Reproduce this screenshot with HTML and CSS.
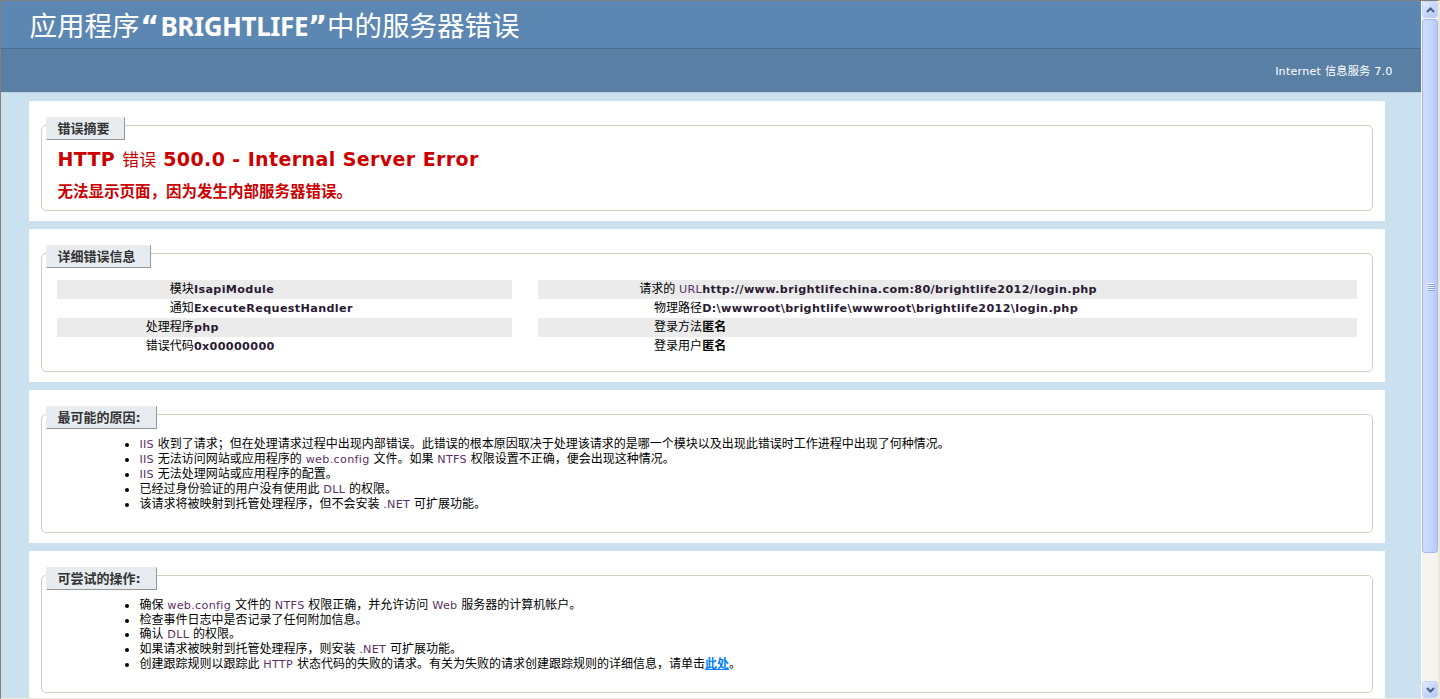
FILE: index.html
```html
<!DOCTYPE html>
<html lang="zh-CN">
<head>
<meta charset="utf-8">
<title>IIS 7.0 详细错误 - 500.0 - Internal Server Error</title>
<link rel="stylesheet" href="styles.css">
</head>
<body>
<div class="window">
  <div class="viewport">
    <div class="header">
      <h1>应用程序<span class="q q-open">“</span><span class="h1-en">BRIGHTLIFE</span><span class="q q-close">”</span>中的服务器错误</h1>
    </div>
    <div class="server-version">
      <p>Internet 信息服务 7.0</p>
    </div>
    <div class="content">
      <div class="container">
        <div class="fs fs-summary">
          <div class="legend">错误摘要</div>
          <h2>HTTP <span class="h2-cjk">错误</span> 500.0 - Internal Server Error</h2>
          <h3>无法显示页面，因为发生内部服务器错误。</h3>
        </div>
      </div>

      <div class="container">
        <div class="fs fs-details">
          <div class="legend">详细错误信息</div>
          <div class="details">
            <div class="details-left">
              <table>
                <tr class="alt"><th>模块</th><td>IsapiModule</td></tr>
                <tr><th>通知</th><td>ExecuteRequestHandler</td></tr>
                <tr class="alt"><th>处理程序</th><td>php</td></tr>
                <tr><th>错误代码</th><td>0x00000000</td></tr>
              </table>
            </div>
            <div class="details-right">
              <table>
                <tr class="alt"><th>请求的 <span class="en">URL</span></th><td>http://www.brightlifechina.com:80/brightlife2012/login.php</td></tr>
                <tr><th>物理路径</th><td>D:\wwwroot\brightlife\wwwroot\brightlife2012\login.php</td></tr>
                <tr class="alt"><th>登录方法</th><td class="cjk">匿名</td></tr>
                <tr><th>登录用户</th><td class="cjk">匿名</td></tr>
              </table>
            </div>
          </div>
        </div>
      </div>

      <div class="container">
        <div class="fs">
          <div class="legend">最可能的原因:</div>
          <ul>
            <li><span class="en">IIS</span> 收到了请求；但在处理请求过程中出现内部错误。此错误的根本原因取决于处理该请求的是哪一个模块以及出现此错误时工作进程中出现了何种情况。</li>
            <li><span class="en">IIS</span> 无法访问网站或应用程序的 <span class="en">web.config</span> 文件。如果 <span class="en">NTFS</span> 权限设置不正确，便会出现这种情况。</li>
            <li><span class="en">IIS</span> 无法处理网站或应用程序的配置。</li>
            <li>已经过身份验证的用户没有使用此 <span class="en">DLL</span> 的权限。</li>
            <li>该请求将被映射到托管处理程序，但不会安装 <span class="en">.NET</span> 可扩展功能。</li>
          </ul>
        </div>
      </div>

      <div class="container">
        <div class="fs">
          <div class="legend">可尝试的操作:</div>
          <ul>
            <li>确保 <span class="en">web.config</span> 文件的 <span class="en">NTFS</span> 权限正确，并允许访问 <span class="en">Web</span> 服务器的计算机帐户。</li>
            <li>检查事件日志中是否记录了任何附加信息。</li>
            <li>确认 <span class="en">DLL</span> 的权限。</li>
            <li>如果请求被映射到托管处理程序，则安装 <span class="en">.NET</span> 可扩展功能。</li>
            <li>创建跟踪规则以跟踪此 <span class="en">HTTP</span> 状态代码的失败的请求。有关为失败的请求创建跟踪规则的详细信息，请单击<a href="#">此处</a>。</li>
          </ul>
        </div>
      </div>
    </div>
  </div>

  <div class="scrollbar">
    <div class="sb-btn">
      <svg width="9" height="6" viewBox="0 0 9 6"><path d="M1 5 L4.5 1.5 L8 5" fill="none" stroke="#4d6185" stroke-width="2"/></svg>
    </div>
    <div class="sb-thumb">
      <div class="grip"><span></span><span></span><span></span><span></span></div>
    </div>
    <div class="sb-track"></div>
    <div class="sb-btn">
      <svg width="9" height="6" viewBox="0 0 9 6"><path d="M1 1 L4.5 4.5 L8 1" fill="none" stroke="#4d6185" stroke-width="2"/></svg>
    </div>
  </div>
</div>
</body>
</html>
```

FILE: styles.css
```css
html, body {
  margin: 0;
  padding: 0;
  height: 699px;
  overflow: hidden;
}

.window {
  display: flex;
  height: 699px;
  box-sizing: border-box;
  border-top: 1px solid #808080;
  border-left: 1px solid #808080;
  border-right: 2px solid #ece9d8;
  border-bottom: 1px solid #ece9d8;
}

.viewport {
  flex: 1;
  min-width: 0;
  overflow: hidden;
  background: #cbe1ef;
  font-family: "DejaVu Sans", "Noto Sans CJK SC", sans-serif;
  font-size: 12px;
  color: #000;
}

/* header */
.header {
  height: 35px;
  padding: 6px 2%;
  background: #5c87b2;
  color: #fff;
  overflow: hidden;
}

.header h1 {
  margin: 0;
  font-family: "Noto Sans CJK SC", sans-serif;
  font-size: 27.5px;
  line-height: 35px;
  font-weight: normal;
  color: #fff;
  white-space: nowrap;
}

.h1-en {
  font-family: "Noto Sans", "Open Sans", sans-serif;
  font-weight: bold;
  font-size: 26px;
  letter-spacing: -0.4px;
  line-height: 0;
}

.q {
  display: inline-block;
  font-family: "DejaVu Sans", sans-serif;
  font-weight: bold;
  font-size: 29px;
  line-height: 0;
  text-align: center;
}

.q-open {
  width: 21px;
}

.q-close {
  width: 19px;
}

.server-version {
  height: 24px;
  padding: 11px 2% 8px;
  background: #5a7fa5;
  border-top: 1px solid #4a6c8e;
  border-bottom: 1px solid #c1cfdd;
  color: #fff;
  text-align: right;
  font-size: 11.2px;
}

.server-version p {
  margin: 5px 0;
  line-height: 14px;
  letter-spacing: 0.2px;
}

/* content */
.content {
  margin-left: 2%;
}

.container {
  background: #fff;
  width: 96%;
  margin-top: 8px;
  padding: 10px;
}

.fs {
  margin: 14px 2px 0;
  padding: 0 15px 10px;
  border: 1px solid #d0d0bf;
  border-radius: 5px;
}

.fs-summary {
  padding-bottom: 7px;
}

.fs-details {
  padding-bottom: 11px;
}

.legend {
  width: max-content;
  margin: -9px 0 8px -11px;
  padding: 4px 15px 4px 10px;
  border-top: 1px solid #ededed;
  border-left: 1px solid #ededed;
  border-right: 1px solid #969696;
  border-bottom: 1px solid #969696;
  background: #e7ecf0;
  color: #333;
  font-weight: bold;
  font-size: 13px;
  line-height: 13px;
}

h2 {
  margin: 0;
  font-size: 19px;
  line-height: 23px;
  color: #cc0000;
  font-weight: bold;
  letter-spacing: 0.4px;
}

.h2-cjk {
  font-weight: normal;
  font-size: 17px;
  letter-spacing: 0;
}

h3 {
  margin: 10px 0 0;
  font-size: 15.5px;
  line-height: 21px;
  color: #cc0000;
  font-weight: bold;
}

/* details */
.details {
  display: flex;
}

.details-left {
  width: 35%;
  margin-right: 2%;
}

.details-right {
  width: 63%;
}

table {
  width: 100%;
  margin: 4px 0;
  border-collapse: collapse;
}

th, td {
  vertical-align: top;
  padding: 3px 0;
  line-height: 13px;
  text-align: left;
}

th {
  width: 30%;
  text-align: right;
  font-weight: normal;
  font-size: 12px;
  white-space: nowrap;
}

.details-right th {
  width: 20%;
}

td {
  font-weight: bold;
  font-size: 11.2px;
  letter-spacing: 0.35px;
  color: #2a1a33;
  white-space: nowrap;
}

td.cjk {
  font-size: 12px;
  letter-spacing: 0;
  color: #000;
}

tr.alt th, tr.alt td {
  background: #ebebeb;
}

/* lists */
ul {
  margin: 0 0 10px 40px;
  padding-left: 42px;
}

li {
  line-height: 14px;
}

.en {
  font-size: 11.2px;
  letter-spacing: 0.3px;
  color: #5c2f66;
}

a {
  color: #007eff;
  font-weight: bold;
  text-decoration: underline;
}

/* scrollbar (Luna style) */
.scrollbar {
  width: 17px;
  flex: none;
  display: flex;
  flex-direction: column;
  background: #f5f4ef;
  border-left: 1px solid #fdfdfb;
  box-sizing: border-box;
}

.sb-btn {
  height: 17px;
  flex: none;
  box-sizing: border-box;
  border: 1px solid #c4d3f6;
  border-radius: 3px;
  background: linear-gradient(135deg, #e4ecfe 0%, #c8d7fc 50%, #b6c9f8 100%);
  display: flex;
  align-items: center;
  justify-content: center;
}

.sb-thumb {
  height: 534px;
  flex: none;
  margin-top: 1px;
  box-sizing: border-box;
  border: 1px solid #a5b9ef;
  border-radius: 3px;
  background: linear-gradient(90deg, #cfdcfe 0%, #c4d5fd 60%, #b4c8f8 100%);
  display: flex;
  align-items: center;
  justify-content: center;
}

.grip {
  display: flex;
  flex-direction: column;
  gap: 1px;
}

.grip span {
  display: block;
  width: 7px;
  height: 1px;
  background: #eef3fe;
  box-shadow: 1px 1px 0 #8aa3e2;
}

.sb-track {
  flex: 1;
}
```
